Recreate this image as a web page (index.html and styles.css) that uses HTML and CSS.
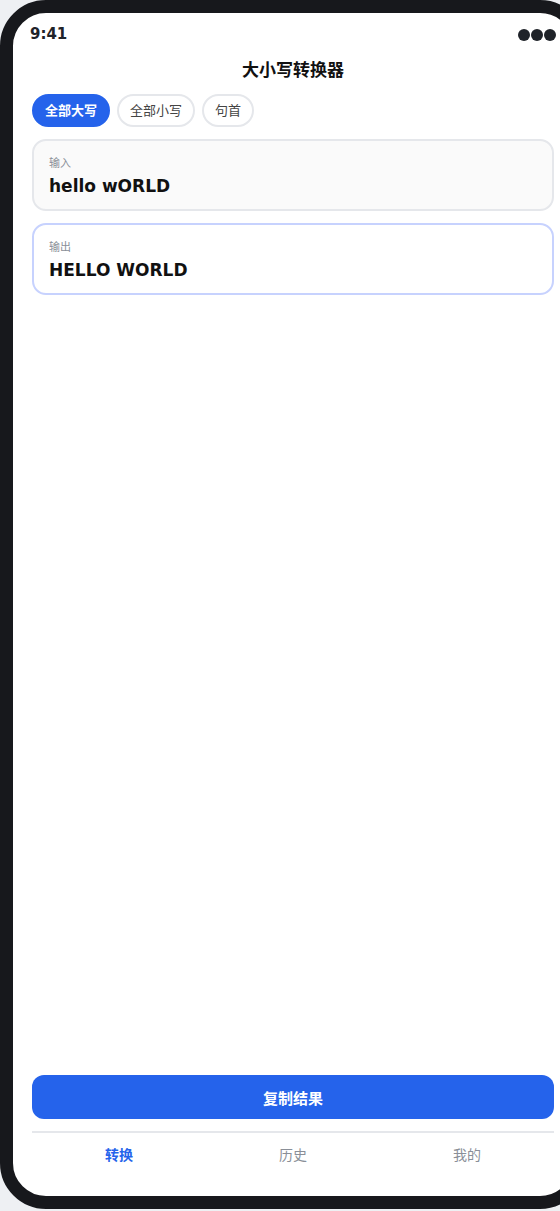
FILE: index.html
```html
<!DOCTYPE html>
<html lang="zh">
<head>
<meta charset="utf-8">
<title>大小写转换器</title>
<link rel="stylesheet" href="styles.css">
</head>
<body>
<div class="phone">
  <div class="status">
    <span class="time">9:41</span>
    <span class="dots"><i></i><i></i><i></i></span>
  </div>
  <h1 class="title">大小写转换器</h1>
  <div class="chips">
    <span class="chip active">全部大写</span>
    <span class="chip">全部小写</span>
    <span class="chip">句首</span>
  </div>
  <div class="card input">
    <div class="label">输入</div>
    <div class="value">hello wORLD</div>
  </div>
  <div class="card output">
    <div class="label">输出</div>
    <div class="value">HELLO WORLD</div>
  </div>
  <div class="spacer"></div>
  <div class="bottom">
    <button class="copy">复制结果</button>
    <nav class="tabs">
      <span class="tab active">转换</span>
      <span class="tab">历史</span>
      <span class="tab">我的</span>
    </nav>
  </div>
</div>
</body>
</html>
```
FILE: styles.css
```css
html, body {
  margin: 0;
  padding: 0;
  background: #eef0f3;
  font-family: "DejaVu Sans", "Noto Sans CJK SC", sans-serif;
}
.phone {
  width: 560px;
  height: 1183px;
  border: 13px solid #17181c;
  border-radius: 46px;
  background: #ffffff;
  overflow: hidden;
  display: flex;
  flex-direction: column;
}
.status {
  height: 38px;
  padding: 2px 17px 0;
  display: flex;
  align-items: center;
  justify-content: space-between;
  flex-shrink: 0;
}
.time {
  font-size: 15px;
  font-weight: bold;
  color: #1f2329;
}
.dots {
  display: flex;
  gap: 1px;
  padding-top: 2px;
}
.dots i {
  width: 12px;
  height: 12px;
  border-radius: 50%;
  background: #1f2329;
  display: block;
}
.title {
  margin: 0;
  height: 35px;
  line-height: 35px;
  text-align: center;
  font-size: 17px;
  font-weight: bold;
  color: #111111;
  flex-shrink: 0;
}
.chips {
  display: flex;
  gap: 7px;
  margin-top: 6px;
  padding: 0 19px;
  flex-shrink: 0;
}
.chip {
  height: 29px;
  line-height: 29px;
  padding: 0 11px;
  border: 2px solid #e5e7eb;
  border-radius: 999px;
  font-size: 13px;
  color: #444444;
  background: #ffffff;
}
.chip.active {
  background: #2563eb;
  border-color: #2563eb;
  color: #ffffff;
  font-weight: bold;
}
.card {
  margin: 12px 19px 0;
  padding: 15px 15px 11px;
  border: 2px solid #e5e7eb;
  border-radius: 14px;
  flex-shrink: 0;
}
.card.input {
  background: #fafafa;
}
.card.output {
  background: #ffffff;
  border-color: #c7d2fe;
}
.label {
  font-size: 11px;
  line-height: 16px;
  color: #8a8f98;
  margin-bottom: 2px;
}
.value {
  font-size: 17px;
  line-height: 24px;
  font-weight: bold;
  color: #111111;
}
.spacer {
  flex: 1;
}
.bottom {
  padding: 0 19px 21px;
  flex-shrink: 0;
}
.copy {
  display: block;
  width: 100%;
  height: 44px;
  border: none;
  border-radius: 12px;
  background: #2563eb;
  color: #ffffff;
  font-family: inherit;
  font-size: 15px;
  font-weight: bold;
  margin: 0 0 12px;
  padding: 0;
}
.tabs {
  border-top: 2px solid #e5e7eb;
  height: 42px;
  display: grid;
  grid-template-columns: 1fr 1fr 1fr;
  align-items: center;
}
.tab {
  text-align: center;
  font-size: 14px;
  color: #8a8f98;
}
.tab.active {
  color: #2563eb;
  font-weight: bold;
}
```
